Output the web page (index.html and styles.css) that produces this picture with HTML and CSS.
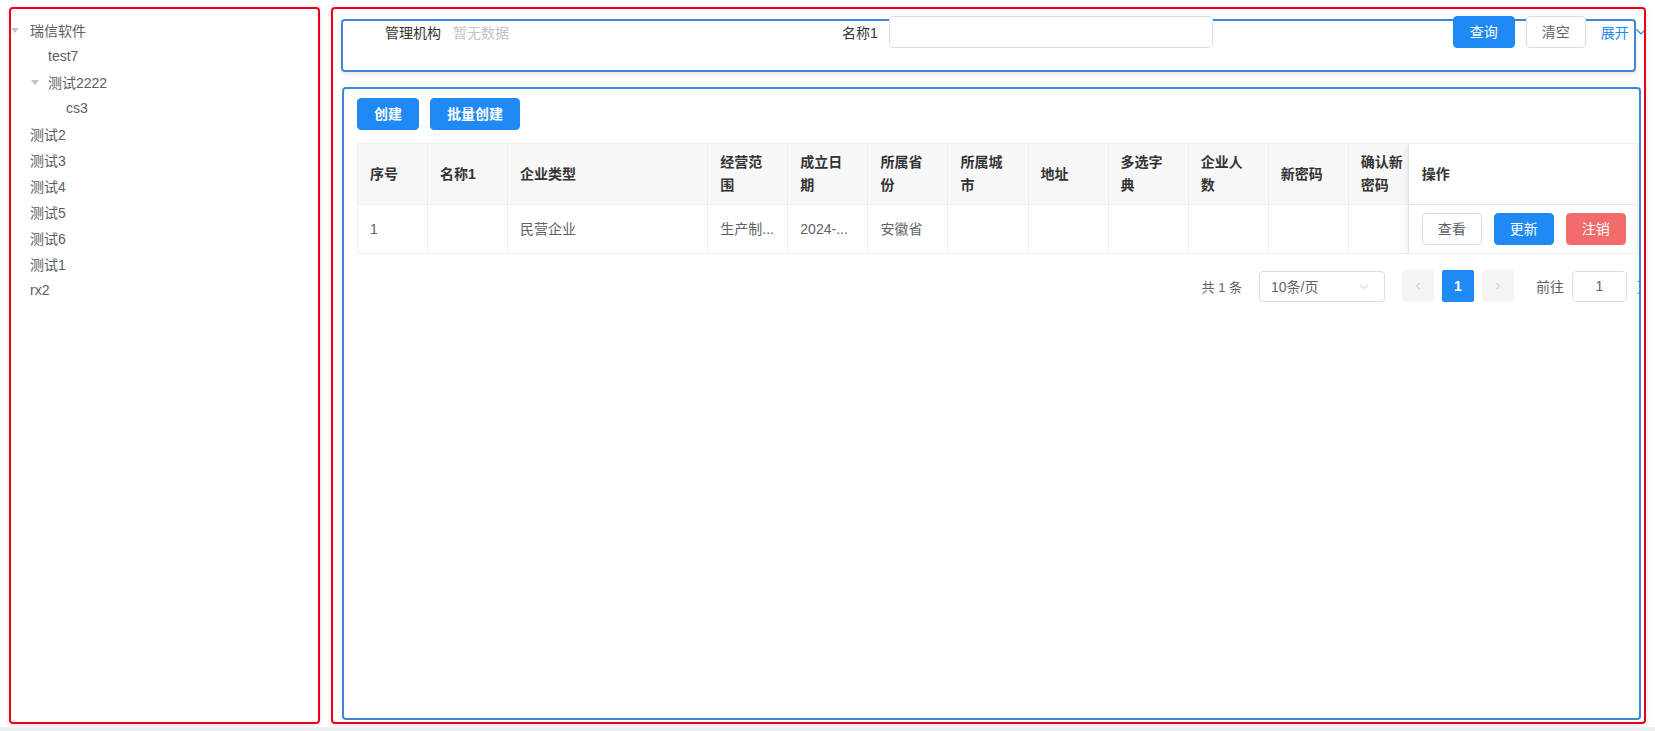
FILE: index.html
```html
<!DOCTYPE html>
<html lang="zh-CN">
<head>
<meta charset="utf-8">
<title>企业管理</title>
<link rel="stylesheet" href="styles.css">
</head>
<body>
<div class="page">
  <aside class="tree-panel">
    <div class="tree">
      <div class="node l0"><span class="caret"></span><span class="txt">瑞信软件</span></div>
      <div class="node l1"><span class="caret hidden"></span><span class="txt">test7</span></div>
      <div class="node l1"><span class="caret"></span><span class="txt">测试2222</span></div>
      <div class="node l2"><span class="caret hidden"></span><span class="txt">cs3</span></div>
      <div class="node l0"><span class="caret hidden"></span><span class="txt">测试2</span></div>
      <div class="node l0"><span class="caret hidden"></span><span class="txt">测试3</span></div>
      <div class="node l0"><span class="caret hidden"></span><span class="txt">测试4</span></div>
      <div class="node l0"><span class="caret hidden"></span><span class="txt">测试5</span></div>
      <div class="node l0"><span class="caret hidden"></span><span class="txt">测试6</span></div>
      <div class="node l0"><span class="caret hidden"></span><span class="txt">测试1</span></div>
      <div class="node l0"><span class="caret hidden"></span><span class="txt">rx2</span></div>
    </div>
  </aside>
  <main class="main-panel">
    <section class="search-box">
      <div class="form-row">
        <span class="lbl lbl-org">管理机构</span>
        <span class="empty">暂无数据</span>
        <span class="lbl lbl-name">名称1</span>
        <span class="input"></span>
        <button class="btn primary btn-query">查询</button>
        <button class="btn plain btn-clear">清空</button>
        <span class="link">展开<svg class="chev" viewBox="0 0 12 12" width="12" height="12"><path d="M1.5 3.5 L6 8 L10.5 3.5" fill="none" stroke="#1f89f4" stroke-width="1.2"/></svg></span>
      </div>
    </section>
    <section class="list-box">
      <div class="toolbar">
        <button class="btn primary bold">创建</button>
        <button class="btn primary bold">批量创建</button>
      </div>
      <div class="table-wrap">
        <table class="grid">
          <colgroup>
            <col class="w70"><col class="w80"><col class="w200"><col class="w80"><col class="w80"><col class="w80"><col class="w80"><col class="w80"><col class="w80"><col class="w80"><col class="w80"><col class="w60"><col class="w230">
          </colgroup>
          <thead>
            <tr>
              <th>序号</th><th>名称1</th><th>企业类型</th><th>经营范围</th><th>成立日期</th><th>所属省份</th><th>所属城市</th><th>地址</th><th>多选字典</th><th>企业人数</th><th>新密码</th><th class="cut">确认新密码</th><th class="op">操作</th>
            </tr>
          </thead>
          <tbody>
            <tr>
              <td>1</td><td></td><td>民营企业</td><td>生产制...</td><td>2024-...</td><td>安徽省</td><td></td><td></td><td></td><td></td><td></td><td class="cut"></td>
              <td class="op"><div class="ops"><button class="btn plain">查看</button><button class="btn primary">更新</button><button class="btn danger">注销</button></div></td>
            </tr>
          </tbody>
        </table>
      </div>
      <div class="pager">
        <span class="total">共 1 条</span>
        <span class="sizes">10条/页<svg viewBox="0 0 12 12" width="12" height="12"><path d="M2 4.5 L6 8.5 L10 4.5" fill="none" stroke="#c0c4cc" stroke-width="1"/></svg></span>
        <span class="pbtn"><svg viewBox="0 0 12 12" width="12" height="12"><path d="M7.5 3 L4.5 6 L7.5 9" fill="none" stroke="#c0c4cc" stroke-width="1"/></svg></span>
        <span class="pbtn active">1</span>
        <span class="pbtn"><svg viewBox="0 0 12 12" width="12" height="12"><path d="M4.5 3 L7.5 6 L4.5 9" fill="none" stroke="#c0c4cc" stroke-width="1"/></svg></span>
        <span class="goto">前往</span>
        <span class="jump">1</span>
        <span class="page-unit">页</span>
      </div>
    </section>
  </main>
</div>
</body>
</html>
```
FILE: styles.css
```css
* { box-sizing: border-box; }
html, body { margin: 0; padding: 0; }
body {
  background: #eef0f2;
  font-family: "Liberation Sans", "Noto Sans CJK SC", sans-serif;
  font-size: 14px;
  color: #606266;
}
.page {
  width: 1655px;
  height: 727px;
  background: #fff;
  display: flex;
  align-items: flex-start;
  padding: 7px 0 0 9px;
  gap: 11px;
}

/* left tree */
.tree-panel {
  width: 311px;
  height: 717px;
  flex: none;
  border: 2px solid #e8001c;
  border-radius: 4px;
  box-shadow: 0 1px 4px rgba(0,0,0,0.12);
  padding-top: 8px;
}
.node {
  display: flex;
  align-items: center;
  height: 26px;
  color: #5a5e66;
}
.node.l1 { padding-left: 18px; }
.node.l2 { padding-left: 36px; }
.caret {
  width: 19px;
  flex: none;
  display: flex;
  align-items: center;
}
.caret::before {
  content: "";
  display: block;
  border-left: 4px solid transparent;
  border-right: 4px solid transparent;
  border-top: 5px solid #c0c4cc;
}
.node.l1 .caret::before { margin-left: 2px; }
.caret.hidden::before { visibility: hidden; }

/* right panel */
.main-panel {
  width: 1315px;
  height: 717px;
  flex: none;
  border: 2px solid #e8001c;
  border-radius: 4px;
  box-shadow: 0 1px 4px rgba(0,0,0,0.12);
  padding: 10px 0 0 8px;
  overflow: hidden;
  display: flex;
  flex-direction: column;
  gap: 15px;
}
.search-box {
  width: 1295px;
  height: 53px;
  border: 2px solid #3d87d8;
  border-radius: 4px;
  box-shadow: 0 2px 4px rgba(0,0,0,0.1);
  flex: none;
}
.form-row {
  display: flex;
  align-items: center;
  height: 32px;
  margin-top: -5px;
  white-space: nowrap;
}
.form-row > * { flex: none; }
.lbl { color: #333; }
.lbl-org { margin-left: 42px; }
.empty { color: #c0c4cc; margin-left: 12px; }
.lbl-name { margin-left: 333px; }
.input {
  margin-left: 11px;
  width: 324px;
  height: 32px;
  border: 1px solid #dcdfe6;
  border-radius: 4px;
  background: #fff;
}
.btn {
  flex: none;
  height: 32px;
  padding: 0 16px;
  border-radius: 4px;
  border: 1px solid #dcdfe6;
  background: #fff;
  color: #606266;
  font-family: "Liberation Sans", "Noto Sans CJK SC", sans-serif;
  font-size: 14px;
  line-height: 30px;
  cursor: pointer;
}
.btn.primary { background: #1f89f4; border-color: #1f89f4; color: #fff; }
.btn.danger { background: #f36c6c; border-color: #f36c6c; color: #fff; }
.btn.bold { font-weight: 700; }
.btn-query { margin-left: 240px; }
.btn-clear { margin-left: 11px; padding: 0 15px; }
.link {
  margin-left: 15px;
  color: #1f89f4;
  display: flex;
  align-items: center;
}
.chev { margin-left: 6px; flex: none; }

.list-box {
  width: 1299px;
  height: 633px;
  margin-left: 1px;
  border: 2px solid #3d87d8;
  border-radius: 4px;
  flex: none;
  overflow: hidden;
  padding: 9px 1px 0 13px;
}
.toolbar {
  display: flex;
  gap: 11px;
  height: 32px;
}
.table-wrap {
  margin-top: 13px;
  width: 1281px;
  border: 1px solid #ebeef5;
  border-bottom: none;
  overflow: hidden;
}
.grid {
  border-collapse: separate;
  border-spacing: 0;
  table-layout: fixed;
  width: 1281px;
}
.w70 { width: 70px; }
.w80 { width: 80px; }
.w200 { width: 200px; }
.w60 { width: 60px; }
.w230 { width: 230px; }
.grid th, .grid td {
  text-align: left;
  vertical-align: middle;
  border-right: 1px solid #ebeef5;
  border-bottom: 1px solid #ebeef5;
  line-height: 23px;
  padding: 0 14px 0 12px;
  overflow: hidden;
  white-space: normal;
}
.grid th {
  height: 61px;
  padding-top: 7px;
  padding-bottom: 7px;
  background: #f8f8f9;
  color: #333;
  font-weight: 700;
}
.grid td {
  height: 49px;
  padding-top: 8px;
  padding-bottom: 8px;
  color: #606266;
  white-space: nowrap;
}
.grid .cut { padding-right: 4px; }
.grid .op {
  background: #fff;
  border-right: none;
  padding-left: 13px;
  box-shadow: -2px 0 6px rgba(0,0,0,0.08);
}
.ops { display: flex; gap: 12px; }
.ops .btn { padding: 0 15px; }

.pager {
  margin-top: 16px;
  margin-right: -13px;
  display: flex;
  justify-content: flex-end;
  align-items: center;
  height: 32px;
  font-size: 13px;
  color: #606266;
  white-space: nowrap;
}
.pager > * { flex: none; }
.total { margin-right: 17px; }
.sizes {
  width: 126px;
  height: 31px;
  border: 1px solid #dcdfe6;
  border-radius: 4px;
  display: flex;
  align-items: center;
  justify-content: space-between;
  padding: 0 14px 0 11px;
  margin-right: 17px;
  font-size: 14px;
}
.pbtn {
  width: 32px;
  height: 32px;
  background: #f4f4f5;
  border-radius: 2px;
  display: flex;
  align-items: center;
  justify-content: center;
  margin-right: 8px;
}
.pbtn.active {
  background: #1f89f4;
  color: #fff;
  font-weight: 700;
  font-size: 14px;
}
.goto { margin-left: 14px; margin-right: 8px; font-size: 14px; }
.jump {
  width: 55px;
  height: 31px;
  border: 1px solid #dcdfe6;
  border-radius: 4px;
  display: flex;
  align-items: center;
  justify-content: center;
  font-size: 14px;
}
.page-unit { margin-left: 10px; font-size: 14px; }
```
